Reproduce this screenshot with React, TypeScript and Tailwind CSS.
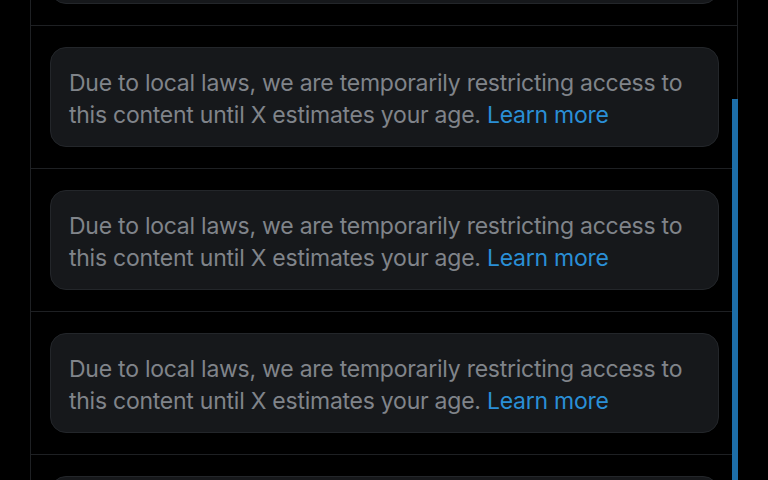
const MESSAGE = "Due to local laws, we are temporarily restricting access to";
const MESSAGE_2 = "this content until X estimates your age.";

function Notice() {
  return (
    <div className="flex h-[100px] items-center rounded-[16px] border border-[#23262a] bg-[#16181b] px-[18px] pt-[4px]">
      <p className="text-[23px] leading-[32px] tracking-[-0.25px] text-[#80848a]">
        {MESSAGE}
        <br />
        {MESSAGE_2} <span className="text-[#2a8fd6]">Learn more</span>
      </p>
    </div>
  );
}

function Row() {
  return (
    <div className="border-b border-[#1e2023] pl-[19px] pr-[18px] py-[21px]">
      <Notice />
    </div>
  );
}

export default function App() {
  return (
    <div
      className="h-[480px] w-[768px] overflow-hidden bg-black"
      style={{ fontFamily: "Inter, 'Noto Sans', sans-serif" }}
    >
      <div className="relative ml-[30px] flex h-full w-[708px] flex-col border-x border-[#1e2023]">
        <div className="-mt-[117px]">
          <Row />
          <Row />
          <Row />
          <Row />
          <Row />
        </div>
        {/* scrollbar thumb */}
        <div className="absolute right-[-1px] top-[99px] bottom-0 w-[6px] bg-[#1d6ea8]" />
      </div>
    </div>
  );
}
